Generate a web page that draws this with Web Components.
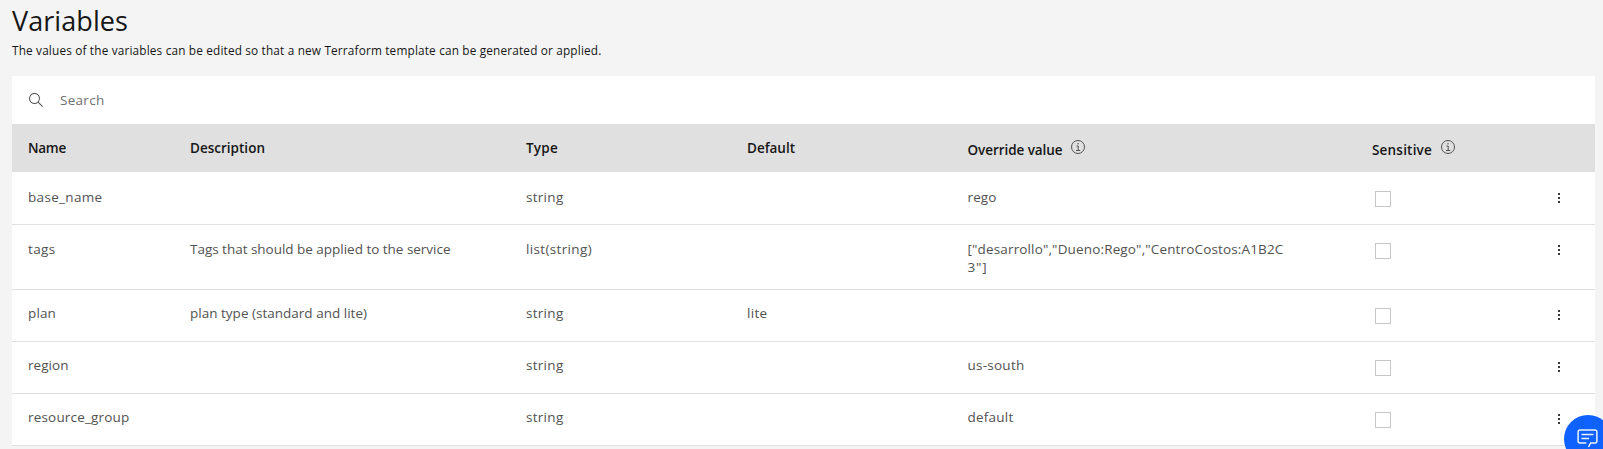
<!DOCTYPE html>
<html lang="en">
<head>
<meta charset="utf-8">
<title>Variables</title>
<style>
html,body{margin:0;height:100%;overflow:hidden;background:#f4f4f4}
body{font-family:"Open Sans","Noto Sans",sans-serif;color:#161616}
</style>
</head>
<body>
<variables-page></variables-page>
<script>
/* Text run whose tracking is adjusted so that it fills a given width. */
class FitText extends HTMLElement{
  connectedCallback(){
    const root=this.attachShadow({mode:'open'});
    root.innerHTML='<style>:host{display:block;width:max-content;white-space:nowrap}span{display:inline-block}</style><span><slot></slot></span>';
    const span=root.querySelector('span');
    const n=this.textContent.length,w=+this.getAttribute('w');
    if(w)span.style.letterSpacing=((w-span.getBoundingClientRect().width)/n).toFixed(3)+'px';
  }
}
customElements.define('fit-text',FitText);

function define(name,html){
  const t=document.createElement('template');
  t.innerHTML=html;
  customElements.define(name,class extends HTMLElement{
    connectedCallback(){
      if(!this.shadowRoot)this.attachShadow({mode:'open'}).append(document.importNode(t.content,true));
    }
  });
}

define('info-icon',`<style>:host{display:block;width:16px;height:16px}svg{display:block}</style>
<svg width="16" height="16" viewBox="0 0 16 16" fill="none" stroke="#525252"><circle cx="8" cy="8" r="6.5"/><path d="M6.5 7h1.7v4.2M6 11.5h4.2" /><circle cx="8" cy="4.8" r=".75" fill="#525252" stroke="none"/></svg>`);

define('search-bar',`<style>:host{display:flex;height:48px;box-sizing:border-box;padding:0 16px;background:#fff;color:#6f6f6f;font-size:13.5px;line-height:18px}
svg{margin:16px 16px 0 0}div{padding-top:15px}</style>
<svg width="16" height="16" viewBox="0 0 16 16" fill="#525252"><path d="M15 14.3 10.7 10c1.9-2.3 1.6-5.8-.7-7.7S4.2.7 2.3 3 .7 8.8 3 10.7c2 1.7 5 1.7 7 0l4.3 4.3zM2 6.5C2 4 4 2 6.500 2S11 4 11 6.500 9 11 6.500 11 2 9 2 6.500z"/></svg>
<div><fit-text w="44.5">Search</fit-text></div>`);

const cols='grid-template-columns:162px 336px 221px 220.5px 404.5px 169px 1fr';
define('table-head',`<style>:host{display:grid;${cols};height:48px;box-sizing:border-box;padding:15px 0 0 16px;background:#e0e0e0;font-size:13.5px;line-height:18px;font-weight:600}
.i{display:flex;gap:7px}.i fit-text{margin-top:2px}.i:last-child{gap:8px}</style>
<fit-text w="38">Name</fit-text><fit-text w="75">Description</fit-text><fit-text w="32">Type</fit-text><fit-text w="48">Default</fit-text>
<div class="i"><fit-text w="95">Override value</fit-text><info-icon></info-icon></div>
<div class="i"><fit-text w="60">Sensitive</fit-text><info-icon></info-icon></div>`);

define('check-box',`<style>:host{display:block;box-sizing:border-box;width:16px;height:16px;border:1px solid #c6c6c6;background:#fff}</style>`);
define('overflow-dots',`<style>:host{display:grid;gap:2px;width:2px;height:10px;align-content:start}i{width:2px;height:2px;background:#393939}</style><i></i><i></i><i></i>`);

define('table-row',`<style>:host{display:grid;${cols};box-sizing:border-box;height:var(--h,52px);padding-left:16px;background:#fff;border-bottom:1px solid #e0e0e0;color:#525252;font-size:13.5px;line-height:18px}
.t{padding-top:var(--t,14px)}check-box{margin:var(--c,18px) 0 0 3px}overflow-dots{margin:calc(var(--c,18px) + 2px) 0 0 17px}</style>
<div class="t"><slot name="name"></slot></div><div class="t"><slot name="desc"></slot></div><div class="t"><slot name="type"></slot></div><div class="t"><slot name="def"></slot></div><div class="t"><slot name="val"></slot></div>
<check-box></check-box><overflow-dots></overflow-dots>`);

define('chat-button',`<style>:host{display:block;position:absolute;left:1562.5px;top:413.5px;width:50px;height:50px}svg{display:block}</style>
<svg width="50" height="50" viewBox="0 0 50 50"><circle cx="25" cy="25" r="25" fill="#fff" opacity=".75"/><circle cx="25" cy="25" r="24" fill="#0f62fe"/>
<g fill="none" stroke="#fff" stroke-width="1.500" opacity=".92"><path d="M23.300 29h-6.200a2 2 0 0 1-2-2V17.900a2 2 0 0 1 2-2h14.800a2 2 0 0 1 2 2v9.100a2 2 0 0 1-2 2h-4.200L25.500 33"/><path d="M18.500 20.500H30.500M18.500 24.500H26"/></g></svg>`);

define('variables-page',`<style>:host{display:block;position:relative;height:449px;overflow:hidden}
header{height:76px;padding-left:12px;box-sizing:border-box}
h1{margin:0;font-size:27px;line-height:36px;font-weight:400;padding-top:3px}
p{margin:0;font-size:11.8px;line-height:16px;padding-top:3px}
main{margin:0 8px 0 12px}</style>
<header><h1><fit-text w="116">Variables</fit-text></h1><p><fit-text w="589.5">The values of the variables can be edited so that a new Terraform template can be generated or applied.</fit-text></p></header>
<main><search-bar></search-bar><table-head></table-head>
<table-row style="--h:53px;--t:16px;--c:19px"><fit-text slot="name" w="74.5">base_name</fit-text><fit-text slot="type" w="37.5">string</fit-text><fit-text slot="val" w="29">rego</fit-text></table-row>
<table-row style="--h:65px;--t:15px"><fit-text slot="name" w="27.5">tags</fit-text><fit-text slot="desc" w="260.500">Tags that should be applied to the service</fit-text><fit-text slot="type" w="66">list(string)</fit-text><fit-text slot="val" w="316">["desarrollo","Dueno:Rego","CentroCostos:A1B2C</fit-text><fit-text slot="val" w="20">3"]</fit-text></table-row>
<table-row><fit-text slot="name" w="28">plan</fit-text><fit-text slot="desc" w="177">plan type (standard and lite)</fit-text><fit-text slot="type" w="37.5">string</fit-text><fit-text slot="def" w="20.500">lite</fit-text></table-row>
<table-row><fit-text slot="name" w="40.500">region</fit-text><fit-text slot="type" w="37.5">string</fit-text><fit-text slot="val" w="57">us-south</fit-text></table-row>
<table-row><fit-text slot="name" w="101.500">resource_group</fit-text><fit-text slot="type" w="37.5">string</fit-text><fit-text slot="val" w="46">default</fit-text></table-row>
</main><chat-button></chat-button>`);
</script>
</body>
</html>
